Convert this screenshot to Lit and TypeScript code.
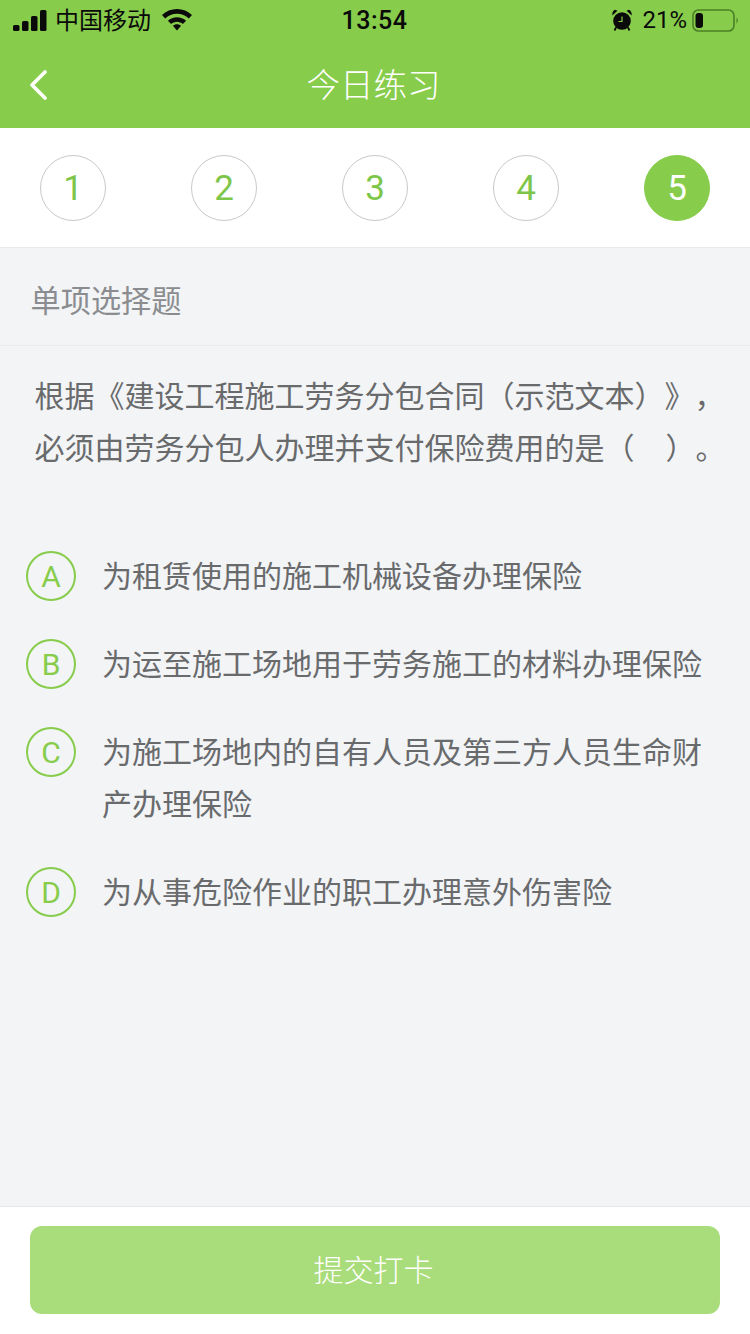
import { LitElement, html, css } from "lit";
import { customElement } from "lit/decorators.js";

const options: [string, string][] = [
  ["A", "为租赁使用的施工机械设备办理保险"],
  ["B", "为运至施工场地用于劳务施工的材料办理保险"],
  ["C", "为施工场地内的自有人员及第三方人员生命财产办理保险"],
  ["D", "为从事危险作业的职工办理意外伤害险"],
];

@customElement("app-root")
export class AppRoot extends LitElement {
  static styles = css`
    :host {
      display: block;
      width: 750px;
      height: 1334px;
      font-family: "Roboto", "Noto Sans CJK SC", sans-serif;
      overflow: hidden;
      text-spacing-trim: space-all;
    }
    .page { display: flex; flex-direction: column; height: 1334px; background: #f2f4f6; }
    .header { height: 128px; background: #87cc4b; display: flex; flex-direction: column; flex: none; }
    .status { height: 40px; display: grid; grid-template-columns: 1fr auto 1fr; align-items: center; padding: 0 12px 0 13px; color: #0a0a0a; font-size: 24px; }
    .status .left, .status .right { display: flex; align-items: center; }
    .status .left { gap: 8px; }
    .status .right { justify-content: flex-end; }
    .status .carrier { font-family: "Noto Sans CJK SC", sans-serif; margin-top: -3px; }
    .status .wifi { margin-left: 3px; }
    .status .time { font-weight: 500; font-size: 25px; letter-spacing: 0.5px; margin-right: 2px; }
    .status .alarm { margin-right: 10px; }
    .status .pct { margin-right: 5px; }
    .nav { flex: 1; display: flex; align-items: center; justify-content: center; position: relative; }
    .nav .back { position: absolute; left: 29px; top: 30px; }
    .nav .title { font-family: "Noto Sans CJK SC", sans-serif; color: #fff; font-size: 33.5px; font-weight: 300; margin: -4px 3px 0 0; }
    .steps { flex: none; background: #fff; border-bottom: 1px solid #e8e9eb; display: flex; justify-content: space-between; align-items: flex-start; padding: 27px 40px 0; box-sizing: border-box; height: 120px; }
    .step { width: 66px; height: 66px; border-radius: 50%; border: 1px solid #c9c9c9; box-sizing: border-box; display: flex; align-items: center; justify-content: center; color: #7ec64a; font-size: 35px; font-weight: 400; }
    .step.on { background: #87cc4b; border-color: #87cc4b; color: #fff; }
    .type { height: 98px; flex: none; box-sizing: border-box; border-bottom: 1px solid #e9ebed; padding: 5px 0 0 30.5px; display: flex; align-items: center; font-family: "Noto Sans CJK SC", sans-serif; font-size: 30.2px; font-weight: 400; color: #8a8c8f; }
    .question { font-family: "Noto Sans CJK SC", sans-serif; font-size: 30px; line-height: 52px; color: #696a6c; padding: 22px 0 0 34.5px; flex: none; white-space: nowrap; }
    .question .gap { display: inline-block; width: 31px; }
    .options { display: flex; flex-direction: column; gap: 36px; padding: 76px 48px 0 26px; flex: none; }
    .option { display: flex; align-items: flex-start; gap: 26px; }
    .mark { width: 50px; height: 50px; margin: 3px 0 -1px; flex: none; border-radius: 50%; border: 2px solid #87cc4b; box-sizing: border-box; display: flex; align-items: center; justify-content: center; color: #87cc4b; font-size: 30px; font-weight: 400; }
    .label { font-family: "Noto Sans CJK SC", sans-serif; font-size: 30px; line-height: 52px; color: #696a6c; }
    .spacer { flex: 1; }
    .footer { height: 128px; flex: none; box-sizing: border-box; background: #fff; border-top: 1px solid #e6e7e9; padding: 19px 30px 0; }
    .submit { height: 88px; box-sizing: border-box; padding: 0 3px 4px 0; border-radius: 12px; background: #a9dc7a; color: #fff; display: flex; align-items: center; justify-content: center; font-family: "Noto Sans CJK SC", sans-serif; font-size: 30px; font-weight: 300; }
  `;

  render() {
    return html`
      <div class="page">
        <div class="header">
          <div class="status">
            <div class="left">
              <svg width="34" height="21" viewBox="0 0 34 21" fill="#0a0a0a">
                <rect x="0" y="15" width="6.500" height="6" rx="1.500"/>
                <rect x="9" y="11" width="6.500" height="10" rx="1.500"/>
                <rect x="18" y="6" width="6.500" height="15" rx="1.500"/>
                <rect x="27" y="0" width="6.500" height="21" rx="1.500"/>
              </svg>
              <span class="carrier">中国移动</span>
              <svg class="wifi" width="30" height="22" viewBox="0 0 30 22" fill="#0a0a0a">
                <path d="M15 0C9.200 0 4 2.200 0 6l3.200 3.400C6.300 6.500 10.400 4.800 15 4.800S23.700 6.500 26.800 9.400L30 6C26 2.200 20.800 0 15 0z"/>
                <path d="M15 8.200c-3.500 0-6.700 1.300-9.100 3.500l3.200 3.400c1.600-1.400 3.700-2.300 5.900-2.300s4.300.9 5.900 2.300l3.200-3.400C21.700 9.500 18.500 8.200 15 8.200z"/>
                <path d="M15 15.200c-1.600 0-3 .6-4.100 1.600L15 21.500l4.100-4.700C18 15.800 16.600 15.200 15 15.200z"/>
              </svg>
            </div>
            <div class="time">13:54</div>
            <div class="right">
              <svg class="alarm" width="20" height="22" viewBox="0 0 20 22">
                <circle cx="10" cy="12" r="8.800" fill="#0a0a0a"/>
                <path d="M0.300 6.500 5.500 1.800 3 .8C1.300 1.300 0 3.500 0.300 6.500zM19.700 6.500 14.500 1.800 17 .8C18.700 1.300 20 3.500 19.700 6.500z" fill="#0a0a0a"/>
                <path d="M4 18.500 2.500 21.500M16 18.500 17.500 21.500" stroke="#0a0a0a" stroke-width="1.800"/>
                <path d="M10 7.500v5H6.500" stroke="#87cc4b" stroke-width="1.200" fill="none"/>
              </svg>
              <span class="pct">21%</span>
              <svg width="46" height="23" viewBox="0 0 46 23">
                <rect x="1" y="1" width="41" height="21" rx="5.500" fill="none" stroke="#4c7f26" stroke-width="1.600"/>
                <rect x="3.500" y="4" width="7.500" height="15" rx="3" fill="#0a0a0a"/>
                <path d="M44.500 8.500v6c.8-.5 1.300-1.600 1.300-3s-.5-2.500-1.300-3z" fill="#4c7f26"/>
              </svg>
            </div>
          </div>
          <div class="nav">
            <svg class="back" width="19" height="30" viewBox="0 0 19 30" fill="none" stroke="#fff" stroke-width="3.600" stroke-linecap="round" stroke-linejoin="round">
              <path d="M16 2 3 15l13 13"/>
            </svg>
            <span class="title">今日练习</span>
          </div>
        </div>
        <div class="steps">
          ${[1, 2, 3, 4, 5].map((n) => html`<div class="step ${n === 5 ? "on" : ""}">${n}</div>`)}
        </div>
        <div class="type">单项选择题</div>
        <div class="question">根据《建设工程施工劳务分包合同（示范文本）》，<br />必须由劳务分包人办理并支付保险费用的是（<span class="gap"></span>）。</div>
        <div class="options">
          ${options.map(
            ([k, t]) => html`<div class="option"><div class="mark">${k}</div><div class="label">${t}</div></div>`
          )}
        </div>
        <div class="spacer"></div>
        <div class="footer"><div class="submit">提交打卡</div></div>
      </div>
    `;
  }
}
